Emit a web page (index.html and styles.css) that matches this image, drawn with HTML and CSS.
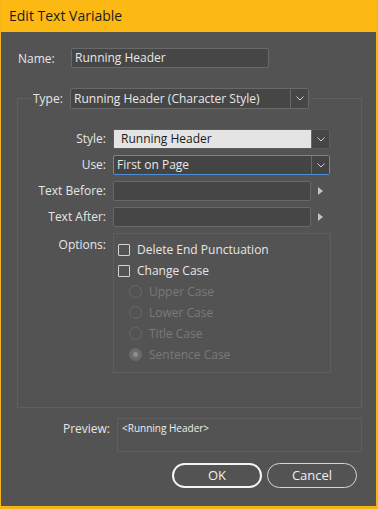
FILE: index.html
```html
<!DOCTYPE html>
<html lang="en">
<head>
<meta charset="utf-8">
<title>Edit Text Variable</title>
<link rel="stylesheet" href="styles.css">
</head>
<body>
<div class="dialog">
  <div class="titlebar">Edit Text Variable</div>
  <div class="content">
    <div class="name-row">
      <span class="name-label">Name:</span>
      <div class="field name-field">Running Header</div>
    </div>

    <fieldset class="group">
      <legend class="type-legend">
        <span class="type-label">Type:</span>
        <div class="select type-select">
          <span class="select-text">Running Header (Character Style)</span>
          <span class="chev-box"><svg class="chev" width="8" height="5" viewBox="0 0 8 5"><polyline points="0.5,0.5 4,4 7.5,0.5" fill="none" stroke="#cfcfcf" stroke-width="1"/></svg></span>
        </div>
      </legend>

      <div class="form-grid">
        <span class="lbl">Style:</span>
        <div class="select light-select">
          <span class="select-text light-text">Running Header</span>
          <span class="chev-box"><svg class="chev" width="8" height="5" viewBox="0 0 8 5"><polyline points="0.5,0.5 4,4 7.5,0.5" fill="none" stroke="#cfcfcf" stroke-width="1"/></svg></span>
        </div>

        <span class="lbl">Use:</span>
        <div class="select focus-select">
          <span class="select-text">First on Page</span>
          <span class="chev-box"><svg class="chev" width="8" height="5" viewBox="0 0 8 5"><polyline points="0.5,0.5 4,4 7.5,0.5" fill="none" stroke="#cfcfcf" stroke-width="1"/></svg></span>
        </div>

        <span class="lbl">Text Before:</span>
        <div class="text-wrap">
          <div class="field text-field"></div>
          <svg class="arrow" width="5" height="8" viewBox="0 0 5 8"><polygon points="0,0 5,4 0,8" fill="#c4c4c4"/></svg>
        </div>

        <span class="lbl">Text After:</span>
        <div class="text-wrap">
          <div class="field text-field"></div>
          <svg class="arrow" width="5" height="8" viewBox="0 0 5 8"><polygon points="0,0 5,4 0,8" fill="#c4c4c4"/></svg>
        </div>

        <span class="lbl lbl-top">Options:</span>
        <div class="options">
          <div class="opt"><span class="checkbox"></span><span>Delete End Punctuation</span></div>
          <div class="opt"><span class="checkbox"></span><span>Change Case</span></div>
          <div class="opt radio-opt disabled"><span class="radio"></span><span>Upper Case</span></div>
          <div class="opt radio-opt disabled"><span class="radio"></span><span>Lower Case</span></div>
          <div class="opt radio-opt disabled"><span class="radio"></span><span>Title Case</span></div>
          <div class="opt radio-opt disabled"><span class="radio checked"></span><span>Sentence Case</span></div>
        </div>
      </div>
    </fieldset>

    <div class="preview-row">
      <span class="preview-label">Preview:</span>
      <div class="preview-box">&lt;Running Header&gt;</div>
    </div>

    <div class="buttons">
      <button class="btn btn-default">OK</button>
      <button class="btn">Cancel</button>
    </div>
  </div>
</div>
</body>
</html>
```

FILE: styles.css
```css
html, body {
  margin: 0;
  padding: 0;
  background: #535353;
}

body {
  font-family: "Open Sans", "Noto Sans", sans-serif;
  font-size: 12px;
  color: #e6e6e6;
}

.dialog {
  width: 378px;
  height: 509px;
  box-sizing: border-box;
  border-left: 1px solid #f6b516;
  border-right: 2px solid #f6b516;
  border-bottom: 3px solid #f6b516;
  display: flex;
  flex-direction: column;
}

.titlebar {
  height: 32px;
  flex-shrink: 0;
  background: #fdb913;
  color: #1c1c1c;
  font-size: 14px;
  line-height: 32px;
  padding-left: 8px;
}

.content {
  flex: 1;
  background: #535353;
}

/* Name row */
.name-row {
  display: flex;
  align-items: center;
  margin-top: 16px;
  padding-left: 17px;
}

.name-label {
  width: 53px;
  flex-shrink: 0;
}

.field {
  box-sizing: border-box;
  height: 20px;
  background: #464646;
  border: 1px solid #696969;
  border-radius: 2px;
  color: #e8e8e8;
  line-height: 18px;
  padding-left: 3px;
}

.name-field {
  width: 198px;
}

/* Group */
.group {
  margin: 20px 0 0 16px;
  width: 345px;
  box-sizing: border-box;
  border: 1px solid #606060;
  padding: 20px 0 34px 0;
  min-width: 0;
}

.type-legend {
  margin-left: 13px;
  padding: 0 2px;
  display: flex;
  align-items: center;
}

.type-label {
  width: 37px;
  line-height: 21px;
}

.select {
  box-sizing: border-box;
  height: 20px;
  background: #464646;
  border: 1px solid #696969;
  border-radius: 2px;
  display: flex;
  align-items: stretch;
}

.type-select {
  width: 239px;
  height: 21px;
}

.select-text {
  flex: 1;
  padding-left: 3px;
  line-height: 18px;
  color: #e8e8e8;
  white-space: nowrap;
  overflow: hidden;
}

.type-select .select-text {
  line-height: 19px;
}

.chev-box {
  width: 17px;
  flex-shrink: 0;
  border-left: 1px solid #696969;
  display: flex;
  align-items: center;
  justify-content: center;
  background: #464646;
}

.chev {
  display: block;
}

/* Grid */
.form-grid {
  display: grid;
  grid-template-columns: 88px auto;
  column-gap: 7px;
  row-gap: 6px;
  justify-content: start;
}

.lbl {
  text-align: right;
  line-height: 20px;
  white-space: nowrap;
}

.lbl-top {
  align-self: start;
  padding-top: 2px;
}

.light-select,
.focus-select {
  width: 217px;
}

.light-select {
  border-color: #5c5c5c;
}

.light-text {
  background: #e4e4e4;
  color: #1a1a1a;
  padding-left: 7px;
}

.focus-select {
  border-color: #4d8fd5;
  background: #444444;
}

.focus-select .chev-box {
  background: #444444;
}

.text-wrap {
  display: flex;
  align-items: center;
  gap: 7px;
}

.text-field {
  width: 198px;
}

.arrow {
  display: block;
}

/* Options */
.options {
  box-sizing: border-box;
  width: 218px;
  height: 140px;
  border: 1px solid #5f5f5f;
  padding: 5px 0 0 4px;
}

.opt {
  height: 21px;
  display: flex;
  align-items: center;
  gap: 7px;
  white-space: nowrap;
}

.checkbox {
  width: 12px;
  height: 12px;
  box-sizing: border-box;
  border: 1px solid #d4d4d4;
  border-radius: 1px;
  flex-shrink: 0;
}

.radio-opt {
  padding-left: 11px;
}

.disabled {
  color: #7a7a7a;
}

.radio {
  width: 13px;
  height: 13px;
  box-sizing: border-box;
  border: 1px solid #696969;
  border-radius: 50%;
  flex-shrink: 0;
  display: flex;
  align-items: center;
  justify-content: center;
}

.radio.checked {
  background: #6a6a6a;
  border-color: #6a6a6a;
}

.radio.checked::after {
  content: "";
  width: 5px;
  height: 5px;
  border-radius: 50%;
  background: #8e8e8e;
}

/* Preview */
.preview-row {
  display: flex;
  align-items: flex-start;
  margin-top: 10px;
}

.preview-label {
  width: 109px;
  flex-shrink: 0;
  text-align: right;
  margin-right: 7px;
  line-height: 20px;
  padding-top: 1px;
}

.preview-box {
  box-sizing: border-box;
  width: 245px;
  height: 34px;
  border: 1px solid #5f5f5f;
  font-size: 10px;
  line-height: 14px;
  padding: 2px 4px;
  color: #eeeeee;
}

/* Buttons */
.buttons {
  display: flex;
  justify-content: flex-end;
  gap: 5px;
  margin-top: 11px;
  padding-right: 19px;
}

.btn {
  width: 90px;
  height: 25px;
  box-sizing: border-box;
  border-radius: 13px;
  background: transparent;
  border: 1px solid #d6d6d6;
  color: #f0f0f0;
  font-family: "Open Sans", "Noto Sans", sans-serif;
  font-size: 13px;
  padding: 0;
  line-height: 21px;
}

.btn-default {
  border: 2px solid #f4f4f4;
}
```
